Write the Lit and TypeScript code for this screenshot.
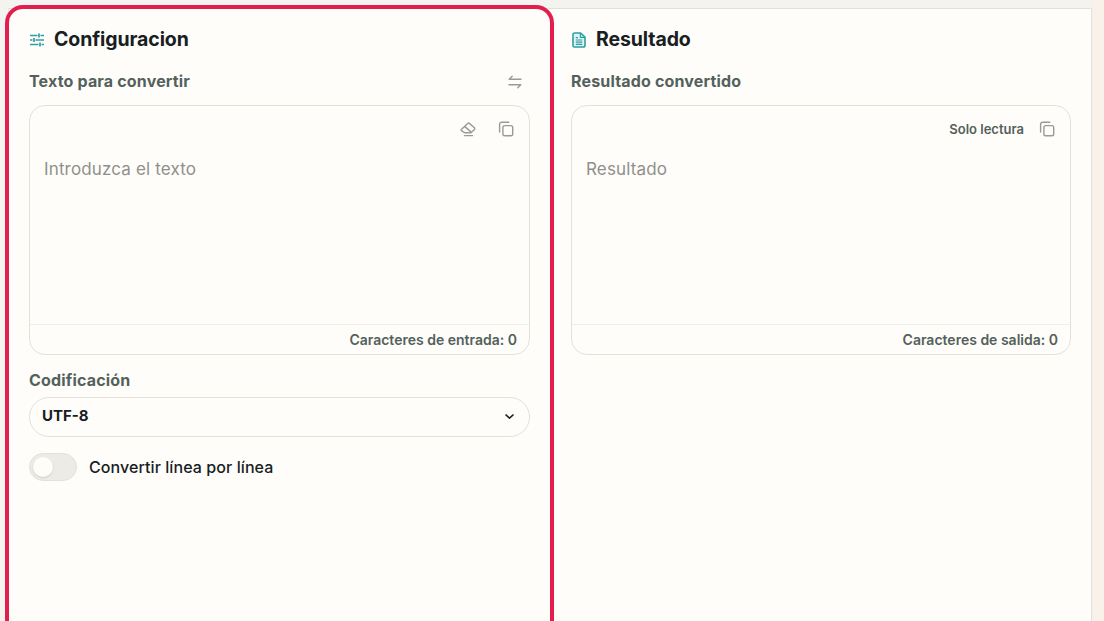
import { LitElement, html, css } from "lit";
import { customElement } from "lit/decorators.js";

const copyIcon = html`<svg class="tool" viewBox="0 0 16 16" width="16" height="16" fill="none" stroke="currentColor" stroke-width="1.4" stroke-linecap="round" stroke-linejoin="round"><rect x="4.9" y="4.6" width="9.8" height="10.2" rx="1.8"/><path d="M1.6 11V3.2C1.6 2 2.5 1.2 3.6 1.2h7.2"/></svg>`;

@customElement("app-root")
export class AppRoot extends LitElement {
  static styles = css`
    :host { display: block; height: 621px; overflow: hidden; position: relative; background: linear-gradient(90deg, #f3f3f0 0, #f3f3f0 1090px, #f7f1ea 1091px, #f8f2ea 100%); font-family: Inter, "Liberation Sans", sans-serif; color: #17201f; }
    .shell { margin: 8px 12px 0 8px; height: 613px; box-sizing: border-box; border-top: 1px solid #e2e1d9; border-left: 1px solid #e8e7e0; border-right: 1px solid #e2e1d9; background: #fffdf9; display: grid; grid-template-columns: 541px 541px; }
    .col { padding: 19px 20px 0 20px; box-sizing: border-box; display: flex; flex-direction: column; min-width: 0; }
    .col.right { padding-left: 21px; padding-right: 20px; }
    .highlight { position: absolute; left: 5px; top: 5px; width: 549px; height: 640px; box-sizing: border-box; border: 4px solid #e31e4f; border-radius: 18px; pointer-events: none; }
    h2 { margin: 0; height: 23px; display: flex; align-items: center; gap: 9px; font-size: 19.5px; line-height: 23px; font-weight: 700; letter-spacing: -0.1px; color: #17201f; }
    h2 svg { flex: none; }
    .labelrow { margin-top: 18px; height: 24px; display: flex; align-items: center; justify-content: space-between; }
    .label { font-size: 16px; font-weight: 700; letter-spacing: .17px; color: #53615c; line-height: 20px; }
    .swap { color: #9a9b96; margin: 2px 7px 0 0; display: block; }
    .box { margin-top: 12px; height: 250px; box-sizing: border-box; border: 1px solid #e3e1d8; border-radius: 16px; display: flex; flex-direction: column; }
    .tools { height: 46px; flex: none; padding: 0 15px; display: flex; justify-content: flex-end; align-items: center; gap: 22px; color: #9a9b96; }
    .tool { display: block; }
    .tools.ro-tools { gap: 15px; }
    .ro { font-size: 13px; font-weight: 600; color: #53615c; }
    .text { flex: 1; padding: 7px 14px; font-size: 17px; line-height: 20px; letter-spacing: .15px; color: #8f908b; }
    .foot { height: 29px; flex: none; border-top: 1px solid #efeee7; padding: 0 12px; display: flex; align-items: center; justify-content: flex-end; font-size: 14px; font-weight: 600; color: #53615c; }
    .codrow { margin-top: 15px; height: 20px; }
    .select { margin-top: 7px; height: 40px; box-sizing: border-box; border: 1px solid #e3e1d8; border-radius: 20px; padding: 0 15px 3px 12px; display: flex; align-items: center; justify-content: space-between; font-size: 15px; font-weight: 700; color: #17201f; }
    .select svg { margin-top: 3px; }
    .switchrow { margin-top: 16px; height: 28px; display: flex; align-items: center; gap: 12px; font-size: 16px; font-weight: 500; letter-spacing: .08px; color: #17201f; }
    .switch { width: 48px; height: 28px; box-sizing: border-box; border: 1px solid #e3e2da; border-radius: 14px; background: #ecebe6; padding: 3px; }
    .knob { width: 20px; height: 20px; border-radius: 50%; background: #fffdf9; box-shadow: 0 1px 2px rgba(0,0,0,.12); }
  `;

  render() {
    return html`
      <div class="shell">
        <section class="col">
          <h2>
            <svg viewBox="0 0 16 16" width="16" height="16" fill="none" stroke="#2f9fa3" stroke-width="1.7"><path d="M1 3.5h7.5M11.5 3.5H15M1 8h2.5M6.5 8H15M1 12.5h8.5M12.5 12.5H15M10 1.5v4M5 6v4M11 10.5v4"/></svg>
            Configuracion
          </h2>
          <div class="labelrow">
            <span class="label">Texto para convertir</span>
            <svg class="swap" viewBox="0 0 16 16" width="16" height="16" fill="none" stroke="currentColor" stroke-width="1.4" stroke-linecap="round" stroke-linejoin="round"><path d="M14 5.3H2.2M2.2 5.3l3-3M2 10.8h11.8M13.8 10.8l-3 3"/></svg>
          </div>
          <div class="box">
            <div class="tools">
              <svg class="tool" viewBox="0 0 16 16" width="16" height="16" fill="none" stroke="currentColor" stroke-width="1.4" stroke-linecap="round" stroke-linejoin="round"><path d="M1.3 8.6 7.7 2.4a1.2 1.2 0 0 1 1.7 0l5 4.4a1.2 1.2 0 0 1 0 1.7l-3.4 3.3H5L1.3 9.6a.7.7 0 0 1 0-1zM4.6 5.4l6 5.2M4.5 14.6h8"/></svg>
              ${copyIcon}
            </div>
            <div class="text">Introduzca el texto</div>
            <div class="foot">Caracteres de entrada: 0</div>
          </div>
          <div class="codrow label">Codificación</div>
          <div class="select">
            <span>UTF-8</span>
            <svg viewBox="0 0 10 6" width="9" height="5.4" fill="none" stroke="#17201f" stroke-width="1.6" stroke-linecap="round" stroke-linejoin="round"><path d="M1 1l4 3.6L9 1"/></svg>
          </div>
          <div class="switchrow"><div class="switch"><div class="knob"></div></div>Convertir línea por línea</div>
        </section>
        <section class="col right">
          <h2>
            <svg viewBox="0 0 16 16" width="16" height="16" fill="none" stroke="#2f9fa3" stroke-width="1.6" stroke-linejoin="round"><path d="M3.4 1h6.2L14 5.2v8.3a1.5 1.5 0 0 1-1.5 1.5h-9A1.5 1.5 0 0 1 2 13.5v-11A1.5 1.5 0 0 1 3.4 1z" fill="#dff1f0"/><path d="M9.4 1v4.4H14M4.8 8h6.4M4.8 10.2h6.4M4.8 12.4h6.4M4.8 5.6h2.2" stroke-width="1.2"/></svg>
            Resultado
          </h2>
          <div class="labelrow"><span class="label">Resultado convertido</span></div>
          <div class="box">
            <div class="tools ro-tools"><span class="ro">Solo lectura</span>${copyIcon}</div>
            <div class="text">Resultado</div>
            <div class="foot">Caracteres de salida: 0</div>
          </div>
        </section>
      </div>
      <div class="highlight"></div>
    `;
  }
}
